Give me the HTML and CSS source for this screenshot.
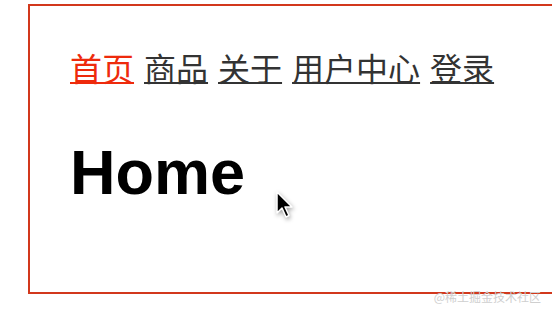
FILE: index.html
```html
<!DOCTYPE html>
<html lang="zh-CN">
<head>
	<meta charset="UTF-8">
	<title>Home</title>
	<link rel="stylesheet" href="styles.css">
</head>
<body>
	<div class="app">
		<nav class="nav">
			<a href="#/" class="active">首页</a>
			<a href="#/goods">商品</a>
			<a href="#/about">关于</a>
			<a href="#/user">用户中心</a>
			<a href="#/login">登录</a>
		</nav>
		<div class="view">
			<h1>Home</h1>
		</div>
	</div>
	<svg class="cursor" width="20" height="30" viewBox="0 0 20 30">
		<path d="M2 1 L2 22 L7 17 L11 26 L14 24.5 L10 16 L17 16 Z" fill="#000" stroke="#fff" stroke-width="1.5" stroke-linejoin="round"/>
	</svg>
	<div class="mark">@稀土掘金技术社区</div>
</body>
</html>
```

FILE: styles.css
```css
*{
	margin: 0px;
	padding: 0px;
}
html,body{
	width: 552px;
	height: 314px;
	overflow: hidden;
	background: #fff;
}
body{
	position: relative;
	font-family: "Liberation Sans", "Noto Sans CJK SC", sans-serif;
}
.app{
	width: 522px;
	height: 286px;
	margin: 4px 0 0 28px;
	border: 2px solid #d2381c;
	border-right: none;
}
.nav{
	display: flex;
	gap: 10px;
	padding: 38px 0 0 40px;
	font-family: "Noto Sans CJK SC", sans-serif;
	font-size: 32px;
	line-height: 46px;
}
.nav a{
	color: #333;
	text-decoration: underline;
	text-decoration-thickness: 2px;
	text-underline-offset: 1px;
}
.nav a.active{
	color: #ee2a0c;
}
.view{
	padding: 46px 0 0 40px;
}
.view h1{
	font-size: 63px;
	line-height: 72px;
	font-weight: bold;
	color: #000;
}
.cursor{
	position: absolute;
	left: 275px;
	top: 191px;
	filter: drop-shadow(1px 2px 2px rgba(0,0,0,0.35));
}
.mark{
	position: absolute;
	right: 11px;
	top: 288px;
	font-family: "Noto Sans CJK SC", sans-serif;
	font-size: 12px;
	color: #cfcfcf;
}
```
